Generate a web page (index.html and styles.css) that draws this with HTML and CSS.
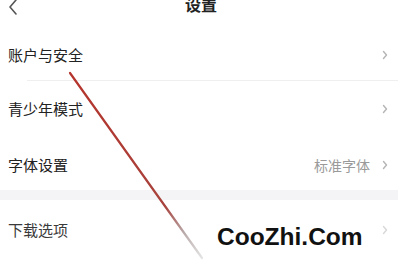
FILE: index.html
```html
<!DOCTYPE html>
<html lang="zh-CN">
<head>
<meta charset="utf-8">
<link rel="stylesheet" href="styles.css">
</head>
<body>
<div class="page">
  <header class="header">
    <svg class="back" width="10" height="16" viewBox="0 0 10 16"><path d="M8 1 L2 8 L8 15" fill="none" stroke="#555" stroke-width="1.6" stroke-linecap="round" stroke-linejoin="round"/></svg>
    <div class="title">设置</div>
    <div></div>
  </header>
  <div class="row row-first">
    <span class="label">账户与安全</span>
    <svg class="chev" width="6" height="10" viewBox="0 0 6 10"><path d="M1.5 1.5 L4.5 5 L1.5 8.5" fill="none" stroke="#b5b5b5" stroke-width="1.4" stroke-linecap="round" stroke-linejoin="round"/></svg>
  </div>
  <div class="row">
    <span class="label">青少年模式</span>
    <svg class="chev" width="6" height="10" viewBox="0 0 6 10"><path d="M1.5 1.5 L4.5 5 L1.5 8.5" fill="none" stroke="#b5b5b5" stroke-width="1.4" stroke-linecap="round" stroke-linejoin="round"/></svg>
  </div>
  <div class="row row-short">
    <span class="label">字体设置</span>
    <span class="right"><span class="value">标准字体</span>
    <svg class="chev" width="6" height="10" viewBox="0 0 6 10"><path d="M1.5 1.5 L4.5 5 L1.5 8.5" fill="none" stroke="#b5b5b5" stroke-width="1.4" stroke-linecap="round" stroke-linejoin="round"/></svg></span>
  </div>
  <div class="band"></div>
  <div class="row row-last">
    <span class="label label-dim">下载选项</span>
    <svg class="chev" width="6" height="10" viewBox="0 0 6 10"><path d="M1.5 1.5 L4.5 5 L1.5 8.5" fill="none" stroke="#d8d8d8" stroke-width="1.4" stroke-linecap="round" stroke-linejoin="round"/></svg>
  </div>
  <svg class="arrow" width="398" height="264" viewBox="0 0 398 264">
    <defs>
      <linearGradient id="g" x1="70" y1="73" x2="202" y2="258" gradientUnits="userSpaceOnUse">
        <stop offset="0" stop-color="#b5342c"/>
        <stop offset="0.72" stop-color="#a8423c"/>
        <stop offset="0.86" stop-color="#b8a8a8"/>
        <stop offset="1" stop-color="#e4e4e4"/>
      </linearGradient>
    </defs>
    <line x1="70" y1="73" x2="202" y2="258" stroke="url(#g)" stroke-width="2.2" stroke-linecap="round"/>
  </svg>
  <div class="watermark">CooZhi.Com</div>
</div>
</body>
</html>
```
FILE: styles.css
```css
html, body {
  margin: 0;
  padding: 0;
  background: #ffffff;
}
.page {
  position: relative;
  width: 398px;
  height: 264px;
  overflow: hidden;
  font-family: "Noto Sans CJK SC", "Noto Sans", sans-serif;
  background: #ffffff;
}
.header {
  height: 28px;
  padding: 0 8px;
  display: grid;
  grid-template-columns: 1fr auto 1fr;
  align-items: start;
  box-sizing: border-box;
}
.back {
  display: block;
  margin-top: -1px;
}
.title {
  font-size: 16px;
  font-weight: 700;
  line-height: 16px;
  color: #222;
  margin-top: -4px;
  padding-left: 4px;
}
.row {
  height: 55px;
  box-sizing: border-box;
  padding: 0 10px 0 8px;
  display: flex;
  align-items: center;
  justify-content: space-between;
}
.row-first {
  height: 53px;
  position: relative;
}
.row-first::after {
  content: "";
  position: absolute;
  left: 27px;
  right: 0;
  bottom: 0;
  height: 1px;
  background: #efefef;
}
.row-short {
  height: 54px;
  padding-top: 3px;
}
.row-last {
  height: 60px;
}
.label {
  font-size: 15px;
  color: #222;
  line-height: 20px;
}
.label-dim {
  color: #3a3a3a;
}
.right {
  display: flex;
  align-items: center;
  gap: 12px;
}
.value {
  font-size: 14px;
  color: #9a9a9a;
  line-height: 20px;
}
.chev {
  display: block;
}
.band {
  height: 10px;
  background: #f4f4f6;
}
.arrow {
  position: absolute;
  left: 0;
  top: 0;
}
.watermark {
  position: absolute;
  left: 217px;
  top: 224px;
  font-family: "Liberation Sans", Arial, sans-serif;
  font-weight: 700;
  font-size: 24.5px;
  line-height: 25px;
  color: #111;
}
```
